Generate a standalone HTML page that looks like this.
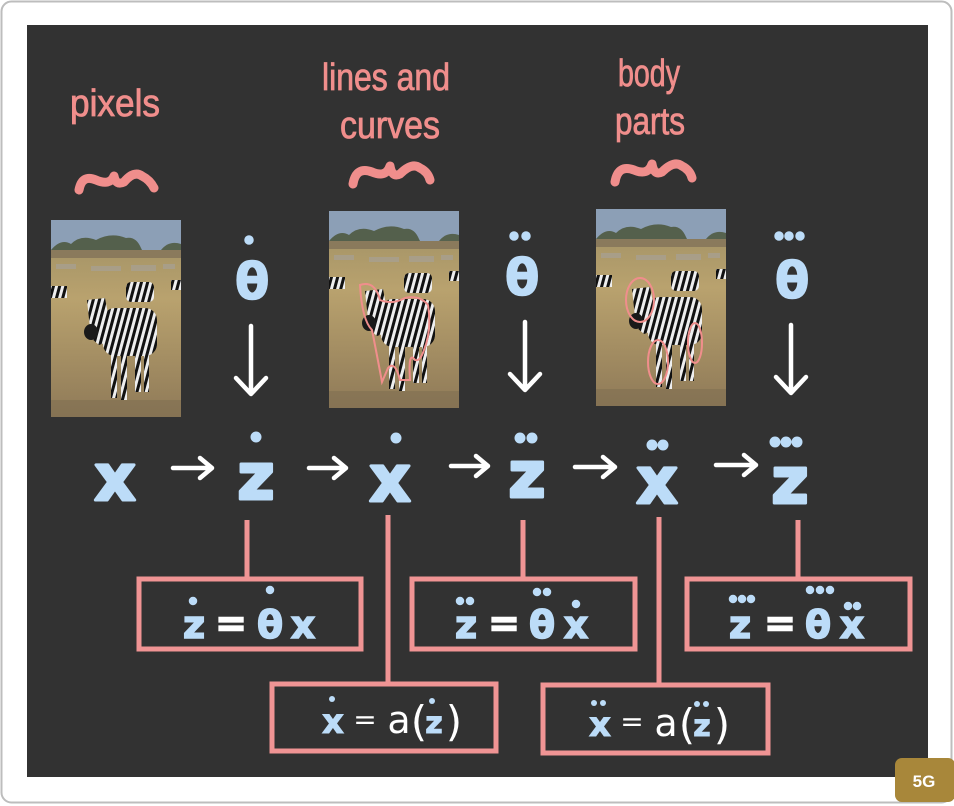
<!DOCTYPE html>
<html><head><meta charset="utf-8"><style>
html,body{margin:0;padding:0;background:#fff;}
body{width:954px;height:806px;overflow:hidden;position:relative;}
</style></head><body>
<svg width="954" height="806" viewBox="0 0 954 806" xmlns="http://www.w3.org/2000/svg" style="position:absolute;left:0;top:0">
<defs>
<linearGradient id="grass" x1="0" y1="0" x2="0" y2="1">
<stop offset="0" stop-color="#9c8e64"/><stop offset="0.4" stop-color="#b9a26e"/><stop offset="1" stop-color="#8f7a58"/>
</linearGradient>
<pattern id="str" width="6" height="10" patternUnits="userSpaceOnUse" patternTransform="rotate(15)">
<rect width="6" height="10" fill="#eee"/><rect width="3" height="10" fill="#111"/>
</pattern>
<g id="photo">
<rect width="130" height="197" fill="url(#grass)"/>
<rect width="130" height="32" fill="#8c9fb6"/>
<path d="M0 30 Q10 18 20 24 Q30 14 45 20 Q60 12 75 18 Q85 16 90 28 L92 32 L0 32Z" fill="#54604c"/>
<path d="M110 30 Q118 20 130 24 L130 32 L110 32Z" fill="#56624e"/>
<rect y="30" width="130" height="8" fill="#8a7a5c"/>
<g fill="#a8a090" opacity="0.8"><rect x="5" y="44" width="20" height="5"/><rect x="40" y="46" width="30" height="5"/><rect x="80" y="45" width="25" height="6"/><rect x="112" y="44" width="12" height="5"/></g>
<rect x="0" y="66" width="16" height="12" fill="url(#str)"/>
<rect x="75" y="62" width="28" height="20" rx="5" fill="url(#str)"/>
<rect x="120" y="60" width="10" height="10" fill="url(#str)"/>
<rect x="52" y="88" width="54" height="48" rx="12" fill="url(#str)"/>
<path d="M36 80 L54 78 L62 120 L48 125 L40 118 Z" fill="url(#str)"/>
<ellipse cx="40" cy="112" rx="7" ry="8" fill="#1a1a1a"/>
<rect x="60" y="132" width="6" height="46" fill="url(#str)"/><rect x="70" y="132" width="6" height="48" fill="url(#str)"/>
<rect x="84" y="130" width="6" height="42" fill="url(#str)"/><rect x="93" y="128" width="5" height="44" fill="url(#str)"/>
<rect x="0" y="180" width="130" height="17" fill="#7c6c50" opacity="0.5"/>
</g>
</defs>
<rect x="1.5" y="1.5" width="950" height="801" rx="10" fill="#fff" stroke="#bdbdbd" stroke-width="2"/>
<rect x="27" y="25" width="901" height="752" fill="#323232"/>

<g font-family="'Liberation Sans',sans-serif" fill="#f08e8c" stroke="#f08e8c" stroke-width="0.8" font-size="38" lengthAdjust="spacingAndGlyphs">
<text x="70" y="116" textLength="90" lengthAdjust="spacingAndGlyphs">pixels</text>
<text x="322" y="90" textLength="128" lengthAdjust="spacingAndGlyphs">lines and</text>
<text x="340" y="138" textLength="100" lengthAdjust="spacingAndGlyphs">curves</text>
<text x="618" y="86" textLength="62" lengthAdjust="spacingAndGlyphs">body</text>
<text x="615" y="134" textLength="70" lengthAdjust="spacingAndGlyphs">parts</text>
</g>
<g fill="none" stroke="#f08e8c" stroke-width="9" stroke-linecap="round" stroke-linejoin="round">
<path d="M79 190 Q82 174 96 180 Q110 186 114 176 Q116 186 124 182 Q134 170 142 176 Q150 180 154 188"/>
<path d="M353 184 Q356 166 372 172 Q386 178 390 166 Q392 178 400 174 Q412 162 420 168 Q428 172 430 180"/>
<path d="M615 182 Q618 164 634 170 Q648 176 652 164 Q654 176 662 172 Q674 160 682 166 Q690 170 692 178"/>
</g>

<use href="#photo" x="51" y="220"/>
<use href="#photo" x="329" y="211"/>
<use href="#photo" x="596" y="209"/>
<g fill="none" stroke="#f08e8c" stroke-width="2">
<path d="M360 285 Q375 280 380 300 Q392 305 405 298 Q420 295 428 305 Q432 330 424 350 Q420 362 415 360 Q408 350 410 380 L400 380 Q395 360 388 368 L382 382 Q376 350 372 330 Q362 320 360 285Z"/>
<ellipse cx="640" cy="300" rx="14" ry="22"/>
<ellipse cx="658" cy="362" rx="10" ry="22"/>
<ellipse cx="695" cy="343" rx="7" ry="20"/>
</g>

<g fill="#bcdcf8" stroke="#bcdcf8" stroke-width="1.5" font-family="'DejaVu Sans',sans-serif" font-weight="bold">
<text x="235" y="299" font-size="50">θ</text><circle cx="249" cy="240" r="4"/>
<text x="505" y="295" font-size="50">θ</text><circle cx="514" cy="236" r="4"/><circle cx="526" cy="236" r="4"/>
<text x="775" y="298" font-size="50">θ</text><circle cx="779" cy="236" r="4"/><circle cx="789" cy="236" r="4"/><circle cx="800" cy="236" r="4"/>
</g>
<g stroke="#fff" stroke-width="4.5" fill="none" stroke-linecap="round" stroke-linejoin="round">
<path d="M251 326 V392 M236 378 L251 394 L266 378"/>
<path d="M525 322 V388 M510 374 L525 390 L540 374"/>
<path d="M791 325 V391 M776 377 L791 393 L806 377"/>
<path d="M173 468 H210 M200 458 L212 468 L200 478"/>
<path d="M309 468 H344 M334 458 L346 468 L334 478"/>
<path d="M451 466 H486 M476 456 L488 466 L476 476"/>
<path d="M575 467 H613 M603 457 L615 467 L603 477"/>
<path d="M716 465 H754 M744 455 L756 465 L744 475"/>
</g>

<g fill="#bcdcf8" stroke="#bcdcf8" stroke-width="3" stroke-linejoin="round" font-family="'DejaVu Sans',sans-serif" font-weight="bold" font-size="64" text-anchor="middle">
<text x="115" y="500">x</text>
<text x="256" y="499">z</text><circle cx="256" cy="437" r="4"/>
<text x="390" y="501">x</text><circle cx="396" cy="438" r="4"/>
<text x="527" y="497">z</text><circle cx="520" cy="438" r="4"/><circle cx="532" cy="438" r="4"/>
<text x="657" y="503">x</text><circle cx="652" cy="445" r="4"/><circle cx="663" cy="445" r="4"/>
<text x="790" y="503">z</text><circle cx="775" cy="442" r="4"/><circle cx="786" cy="442" r="4"/><circle cx="797" cy="442" r="4"/>
</g>

<g stroke="#f09494" stroke-width="5" fill="none">
<path d="M247 520 V578 M388 515 V683 M523 520 V578 M659 517 V685 M798 520 V578"/>
<rect x="139" y="579" width="222" height="70"/>
<rect x="412" y="579" width="223" height="70"/>
<rect x="687" y="579" width="223" height="70"/>
<rect x="272" y="684" width="224" height="67"/>
<rect x="543" y="685" width="225" height="68"/>
</g>

<g font-family="'DejaVu Sans',sans-serif" font-weight="bold" font-size="38" fill="#bcdcf8" stroke="#bcdcf8" stroke-width="1.5" text-anchor="middle">
<text x="194" y="638">z</text><circle cx="193" cy="601" r="3.5"/>
<text x="231" y="636" fill="#fff" stroke="#fff">=</text>
<text x="270" y="638">θ</text><circle cx="270" cy="590" r="3.5"/>
<text x="303" y="638">x</text>

<text x="466" y="638">z</text><circle cx="460" cy="601" r="3.5"/><circle cx="470" cy="601" r="3.5"/>
<text x="504" y="636" fill="#fff" stroke="#fff">=</text>
<text x="542" y="638">θ</text><circle cx="537" cy="592" r="3.5"/><circle cx="547" cy="592" r="3.5"/>
<text x="576" y="638">x</text><circle cx="576" cy="604" r="3.5"/>

<text x="740" y="638">z</text><circle cx="733" cy="599" r="3.5"/><circle cx="742" cy="599" r="3.5"/><circle cx="751" cy="599" r="3.5"/>
<text x="780" y="636" fill="#fff" stroke="#fff">=</text>
<text x="818" y="638">θ</text><circle cx="810" cy="590" r="3.5"/><circle cx="820" cy="590" r="3.5"/><circle cx="830" cy="590" r="3.5"/>
<text x="852" y="638">x</text><circle cx="848" cy="606" r="3.5"/><circle cx="857" cy="606" r="3.5"/>
</g>
<g font-family="'DejaVu Sans',sans-serif" fill="#bcdcf8" text-anchor="middle">
<text x="333" y="733" font-weight="bold" font-size="34" stroke="#bcdcf8" stroke-width="1">x</text><circle cx="332" cy="699" r="3"/>
<text x="365" y="729" fill="#fff" font-size="28">=</text>
<text x="399" y="733" fill="#fff" font-size="38">a</text>
<text x="419" y="736" fill="#fff" font-size="42">(</text>
<text x="434" y="733" font-weight="bold" font-size="30" stroke="#bcdcf8" stroke-width="1">z</text><circle cx="432" cy="701" r="3"/>
<text x="454" y="736" fill="#fff" font-size="42">)</text>

<text x="600" y="736" font-weight="bold" font-size="34" stroke="#bcdcf8" stroke-width="1">x</text><circle cx="594" cy="703" r="3"/><circle cx="603" cy="703" r="3"/>
<text x="632" y="731" fill="#fff" font-size="28">=</text>
<text x="666" y="736" fill="#fff" font-size="38">a</text>
<text x="687" y="739" fill="#fff" font-size="42">(</text>
<text x="702" y="736" font-weight="bold" font-size="30" stroke="#bcdcf8" stroke-width="1">z</text><circle cx="697" cy="704" r="3"/><circle cx="706" cy="704" r="3"/>
<text x="722" y="739" fill="#fff" font-size="42">)</text>
</g>

<rect x="895" y="758" width="60" height="44" rx="7" fill="#a8873a"/>
<text x="924" y="787" text-anchor="middle" font-family="'Liberation Sans',sans-serif" font-weight="bold" font-size="17" fill="#fff">5G</text>
</svg>
</body></html>
